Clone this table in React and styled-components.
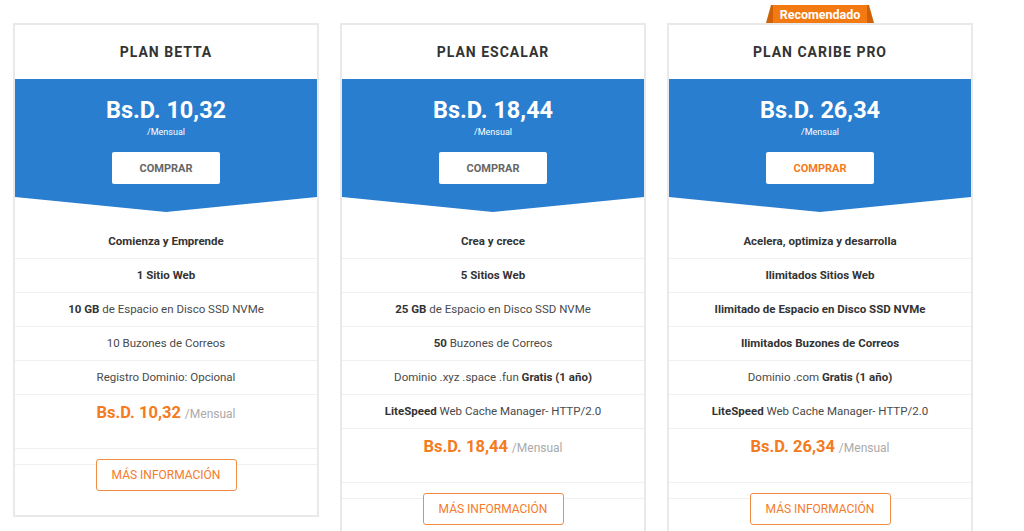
import React from 'react'
import styled, { createGlobalStyle } from 'styled-components'

const plans = [
  {
    name: 'PLAN BETTA',
    price: '10,32',
    features: [
      [{ b: 'Comienza y Emprende' }],
      [{ b: '1 Sitio Web' }],
      [{ b: '10 GB' }, ' de Espacio en Disco SSD NVMe'],
      ['10 Buzones de Correos'],
      ['Registro Dominio: Opcional'],
    ],
  },
  {
    name: 'PLAN ESCALAR',
    price: '18,44',
    features: [
      [{ b: 'Crea y crece' }],
      [{ b: '5 Sitios Web' }],
      [{ b: '25 GB' }, ' de Espacio en Disco SSD NVMe'],
      [{ b: '50' }, ' Buzones de Correos'],
      ['Dominio .xyz .space .fun ', { b: 'Gratis (1 año)' }],
      [{ b: 'LiteSpeed' }, ' Web Cache Manager- HTTP/2.0'],
    ],
  },
  {
    name: 'PLAN CARIBE PRO',
    price: '26,34',
    featured: true,
    features: [
      [{ b: 'Acelera, optimiza y desarrolla' }],
      [{ b: 'Ilimitados Sitios Web' }],
      [{ b: 'Ilimitado de Espacio en Disco SSD NVMe' }],
      [{ b: 'Ilimitados Buzones de Correos' }],
      ['Dominio .com ', { b: 'Gratis (1 año)' }],
      [{ b: 'LiteSpeed' }, ' Web Cache Manager- HTTP/2.0'],
    ],
  },
]

export default function App() {
  return (
    <>
      <GlobalStyle />
      <Page>
        {plans.map(plan => (
          <PlanCard key={plan.name} plan={plan} />
        ))}
      </Page>
    </>
  )
}

///////////////////////////////////////////////////////////////////////////////////

const GlobalStyle = createGlobalStyle`
  html, body {
    margin: 0;
    background: #fff;
    font-family: Roboto, "Liberation Sans", Arial, sans-serif;
    overflow: hidden;
  }
`

const Page = styled.main`
  display: flex;
  align-items: flex-start;
  gap: 21px;
  padding: 23px 0 0 13px;
  height: 531px;
  box-sizing: border-box;
`

///////////////////////////////////////////////////////////////////////////////////

function PlanCard({ plan }) {
  return (
    <Card>
      {plan.featured && <Badge>Recomendado</Badge>}
      <Header>{plan.name}</Header>
      <Band>
        <BandPrice>Bs.D. {plan.price}</BandPrice>
        <Period>/Mensual</Period>
        <BuyButton $featured={plan.featured}>COMPRAR</BuyButton>
      </Band>
      <Features>
        {plan.features.map((parts, i) => (
          <Feature key={i}>
            {parts.map((p, j) =>
              typeof p === 'string' ? <span key={j}>{p}</span> : <strong key={j}>{p.b}</strong>
            )}
          </Feature>
        ))}
        <PriceRow>
          <FootPrice>Bs.D. {plan.price}</FootPrice> <FootPeriod>/Mensual</FootPeriod>
        </PriceRow>
        <Spacer />
      </Features>
      <Footer>
        <InfoButton>MÁS INFORMACIÓN</InfoButton>
      </Footer>
    </Card>
  )
}

///////////////////////////////////////////////////////////////////////////////////

const Card = styled.section`
  position: relative;
  flex: 0 0 306px;
  box-sizing: border-box;
  border: 2px solid #e9e9e9;
  background: #fff;
  text-align: center;
`

const Badge = styled.span`
  position: absolute;
  top: -20px;
  left: 50%;
  transform: translateX(-50%);
  width: 108px;
  height: 18px;
  line-height: 19px;
  font-size: 12.5px;
  font-weight: 700;
  color: #fff;
  background: linear-gradient(
    90deg,
    #cf6209 0,
    #cf6209 7px,
    #f37a12 7px,
    #f37a12 calc(100% - 7px),
    #cf6209 calc(100% - 7px)
  );
  clip-path: polygon(5px 0, calc(100% - 5px) 0, 100% 100%, 0 100%);
`

const Header = styled.h2`
  margin: 0;
  height: 54px;
  line-height: 54px;
  font-size: 14px;
  font-weight: 700;
  letter-spacing: 1px;
  color: #333;
`

const Band = styled.div`
  height: 133px;
  box-sizing: border-box;
  padding-top: 18px;
  background: #2a7ecf;
  clip-path: polygon(0 0, 100% 0, 100% 118px, 50% 100%, 0 118px);
  color: #fff;
`

const BandPrice = styled.div`
  font-size: 23.5px;
  line-height: 27px;
  font-weight: 700;
`

const Period = styled.div`
  margin-top: 2px;
  font-size: 9px;
  line-height: 12px;
`

const BuyButton = styled.button`
  margin-top: 14px;
  width: 108px;
  height: 32px;
  border: 0;
  border-radius: 2px;
  background: #fff;
  font-family: inherit;
  font-size: 11px;
  font-weight: 700;
  color: ${p => (p.$featured ? '#f47b20' : '#666')};
`

const Features = styled.ul`
  list-style: none;
  margin: 13px 0 0;
  padding: 0;
`

const Feature = styled.li`
  padding: 10px 4px;
  line-height: 13px;
  font-size: 11.5px;
  color: #4a4a4a;
  border-bottom: 1px solid #f0f0f0;

  strong {
    font-weight: 700;
    color: #333;
  }
`

const PriceRow = styled.li`
  height: 53px;
  line-height: 36px;
  border-bottom: 1px solid #f0f0f0;
`

const FootPrice = styled.span`
  font-size: 16.5px;
  font-weight: 700;
  color: #f47b20;
`

const FootPeriod = styled.span`
  font-size: 12px;
  color: #aaa;
`

const Spacer = styled.li`
  height: 15px;
  border-bottom: 1px solid #f0f0f0;
`

const Footer = styled.div`
  margin-top: -6px;
  padding-bottom: 24px;
`

const InfoButton = styled.button`
  width: 141px;
  height: 32px;
  border: 1px solid #f28c45;
  border-radius: 3px;
  background: #fff;
  font-family: inherit;
  font-size: 12px;
  color: #f47b2a;
`
